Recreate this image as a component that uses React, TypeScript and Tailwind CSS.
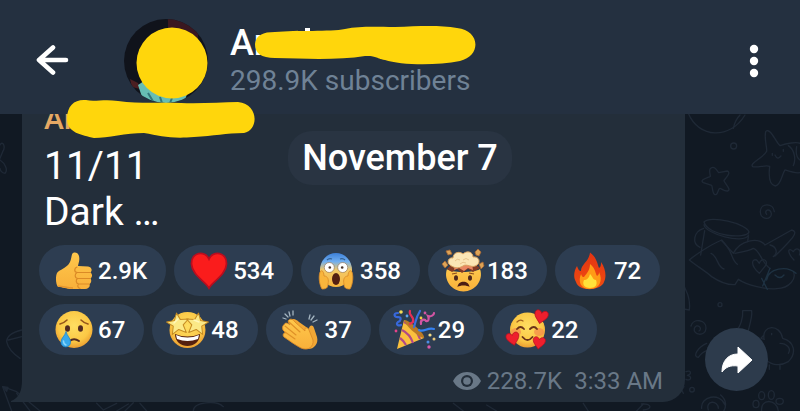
import type { ReactElement } from "react";

type EmojiName =
  | "thumb"
  | "heart"
  | "scream"
  | "mindBlown"
  | "fire"
  | "cry"
  | "starStruck"
  | "clap"
  | "party"
  | "loved";

interface Reaction {
  emoji: EmojiName;
  label: string;
  count: string;
}

const reactions: Reaction[] = [
  { emoji: "thumb", label: "Thumbs up", count: "2.9K" },
  { emoji: "heart", label: "Heart", count: "534" },
  { emoji: "scream", label: "Screaming", count: "358" },
  { emoji: "mindBlown", label: "Mind blown", count: "183" },
  { emoji: "fire", label: "Fire", count: "72" },
  { emoji: "cry", label: "Crying", count: "67" },
  { emoji: "starStruck", label: "Star struck", count: "48" },
  { emoji: "clap", label: "Clapping", count: "37" },
  { emoji: "party", label: "Party", count: "29" },
  { emoji: "loved", label: "Loved", count: "22" },
];

const HEART =
  "M0 9 C-3 5 -9 1 -9 -4 C-9 -10 -2 -10 0 -5 C2 -10 9 -10 9 -4 C9 1 3 5 0 9Z";
const STAR =
  "M0 -11 L3 -4 L11 -3.5 L5 1.5 L7 9.5 L0 5.5 L-7 9.5 L-5 1.5 L-11 -3.5 L-3 -4Z";

const emojiArt: Record<EmojiName, ReactElement> = {
  thumb: (
    <>
      <path
        d="M4 22 C6 19 11 18 15 14 C18 11 18 7 19 3.5 C20 .5 25 1 26 5 C27 9 25.5 12 25 15 L35 15.5 C39 16 39.5 20 37.5 21.5 C39.5 23 39.5 26 37.5 27.5 C39 29.5 38 32 36.5 33 C37.5 35.5 35.5 38 32 38 L19 38 C13 38 10 36 5 36 C2.5 33 2.5 25 4 22Z"
        fill="url(#skin)"
      />
      <path
        d="M24 16 C21 17 21 21 24 21.5 L37 21.5 M24 21.5 C21.5 23 21.5 27 24.5 27.5 L37 27.5 M24.5 27.5 C22.5 29 23 32.5 25.5 33 L36 33 M25.5 33 C24 35 25 37 27 37.5"
        fill="none"
        stroke="#db8a26"
        strokeWidth="1.2"
        strokeLinecap="round"
      />
      <path d="M5 35 C12 35.5 13 37 20 37" fill="none" stroke="#e5962e" strokeWidth="1.5" />
    </>
  ),
  heart: (
    <path
      d="M21 37 C18 31 4 24 3.5 13 C3 1 17 -1 21 8 C25 -1 39 1 38.5 13 C38 24 24 31 21 37Z"
      fill="#fa1c1c"
      stroke="#b90d1e"
      strokeWidth="1.8"
    />
  ),
  scream: (
    <>
      <ellipse cx="21" cy="19" rx="16" ry="17" fill="url(#screamFace)" />
      <path d="M12 9 Q14 7 17 8 M25 8 Q28 7 30 9" fill="none" stroke="#315f92" strokeWidth="1.2" />
      <circle cx="14.3" cy="16.5" r="5" fill="#fff" stroke="#8a6a4a" strokeWidth=".6" />
      <circle cx="27.7" cy="16.5" r="5" fill="#fff" stroke="#8a6a4a" strokeWidth=".6" />
      <circle cx="14.8" cy="16.5" r="1.3" fill="#4a352c" />
      <circle cx="27.2" cy="16.5" r="1.3" fill="#4a352c" />
      <ellipse cx="21" cy="28" rx="4" ry="6" fill="#542012" />
      <path
        d="M5 21 C7 18 9 21 9 25 C13 25 14 29 13 33 C13 37 11 38 7 38 C5 35 3 27 5 21Z M37 21 C35 18 33 21 33 25 C29 25 28 29 29 33 C29 37 31 38 35 38 C37 35 39 27 37 21Z"
        fill="#f9b53c"
        stroke="#d98927"
        strokeWidth=".8"
      />
    </>
  ),
  mindBlown: (
    <>
      <path d="M5 18 C8 22 33 22 38 18 C42 29 33 40.5 21.5 40.5 C10 40.5 1 29 5 18Z" fill="url(#skin)" />
      <path d="M5 18 L10 21 L15 18 L20 22 L26 18 L31 21 L38 17 L34 14 H9Z" fill="#833b25" />
      <path d="M13 13 H30 L31 19 L26 17 L22 20 L17 17 L12 19Z" fill="#e98662" />
      <path
        d="M8 14 C4 11 7 6 11 7 C11 1 18 0 21 3 C25 -1 31 1 31 6 C37 5 39 11 35 14 C30 18 25 12 21 15 C16 18 12 17 8 14Z"
        fill="#fbe5b5"
        stroke="#d9a15f"
        strokeWidth="1"
      />
      <path d="M13 10 Q15 7 18 9 M21 9 Q24 6 27 9 M18 13 Q21 10 24 12" fill="none" stroke="#e8c48c" strokeWidth="1" />
      <path
        d="M4 0 L8 -1 L10 3 L6 4Z M33 1 L36 -2 L39 1 L37 5 L34 4Z M0 13 L3 10 L6 14 L3 17Z M37 13 L41 11 L42 15 L39 18Z"
        fill="#dda356"
        stroke="#a76734"
        strokeWidth=".8"
      />
      <ellipse cx="14" cy="27" rx="2" ry="2.8" fill="#51291b" />
      <ellipse cx="28" cy="27" rx="2" ry="2.8" fill="#51291b" />
      <path d="M10 23 L15 22 M27 22 L32 23" stroke="#8d4d1d" strokeWidth="1.2" />
      <path d="M15.5 36 C16 29 27 29 27.5 36 C25 34 18 34 15.5 36Z" fill="#4c1d14" />
    </>
  ),
  fire: (
    <>
      <path
        d="M21 1.5 C28 7 28 12 30 17 C32 16 32 13 32 11 C37 18 37.5 26 35 31 C32 40 10 41 7 31 C4 26 5 20 8 15 C9 18 10 20 12 20 C12 13 20 11 21 1.5Z"
        fill="url(#flame)"
      />
      <path
        d="M21 13 C27 18 26 22 28 25 C30 24 30 22 30 21 C34 29 31 38 21 38 C11 38 9 30 12 23 C13 26 14 26 15 26 C18 22 21 19 21 13Z"
        fill="#ff9b16"
      />
      <path d="M21 23 C24 26 24 29 27 29 C29 34 26 37 21 37 C15 37 13 33 15 29 C18 29 20 27 21 23Z" fill="#ffe23a" />
    </>
  ),
  cry: (
    <>
      <circle cx="21" cy="19.5" r="18.5" fill="url(#face)" />
      <path
        d="M7 14 Q11 13 14 10 M28 10 Q31 13 35 14"
        fill="none"
        stroke="#95551b"
        strokeWidth="1.6"
        strokeLinecap="round"
      />
      <ellipse cx="14.5" cy="18.5" rx="2.5" ry="3.3" fill="#522b20" />
      <ellipse cx="27.5" cy="18.5" rx="2.5" ry="3.3" fill="#522b20" />
      <path d="M16.5 31 Q21 27.5 26 31" fill="none" stroke="#522b20" strokeWidth="2" strokeLinecap="round" />
      <path
        d="M13 21.5 C14 26 17.5 28 17.5 32 C17.5 38.5 8 38.5 8 32 C8 28 12 26 13 21.5Z"
        fill="#38a9ea"
        stroke="#2385c5"
        strokeWidth=".8"
      />
      <path d="M10.5 31 Q10.5 34 13 35" fill="none" stroke="#8ad7fb" strokeWidth="1.5" strokeLinecap="round" />
    </>
  ),
  starStruck: (
    <>
      <circle cx="21.5" cy="20" r="18" fill="url(#face)" />
      <path d="M9 24 Q21.5 29 34 24 C34 40 9 40 9 24Z" fill="#55200f" />
      <path d="M10 25 Q21.5 30 33 25 L32 29 Q21.5 33 11 29Z" fill="#fff" />
      <g fill="#fbe987" stroke="#c58b22" strokeWidth="1" strokeLinejoin="round">
        <path d={STAR} transform="translate(12 14) rotate(-8)" />
        <path d={STAR} transform="translate(31 14) rotate(8)" />
      </g>
      <path d="M8 13 L12 9 M28 10 L33 12" stroke="#fff8ba" strokeWidth="1.5" strokeLinecap="round" />
    </>
  ),
  clap: (
    <>
      <path
        d="M10 12 C12 7 16 9 19 12 L29 19 C29 15 33 14 34 18 L37 27 C39 34 33 40 27 39 C19 38 16 33 9 28 Z"
        fill="#f1a735"
      />
      <path
        d="M4 15 C5 12 8 13 10 15 L8 11 C10 8 13 9 15 12 L25 21 C24 17 28 17 29 20 L33 30 C34 37 28 41 21 38 C15 35 10 31 4 27 C2 25 4 22 6 23 L3 20 C2 17 3 15 4 15Z"
        fill="url(#skin)"
        stroke="#db8a26"
        strokeWidth=".9"
      />
      <path
        d="M5 16 L16 25 M9 12 L20 22 M5 22 L15 29"
        stroke="#df9027"
        strokeWidth="1.1"
        strokeLinecap="round"
      />
      <path
        d="M9 2 L10 6 M5 4 L8 7 M3 8 L6 9 M13 1 L13 5 M30 5 L29 9 M34 6 L31 10 M37 10 L33 12"
        stroke="#a3b4c0"
        strokeWidth="1.3"
        strokeLinecap="round"
      />
    </>
  ),
  party: (
    <>
      <path d="M4 39 L11 10 C19 14 27 21 31 28Z" fill="#fac03e" />
      <path d="M9 20 Q17 24 20 33 M7 28 Q11 31 13 35 M11 12 Q23 17 27 29" fill="none" stroke="#b14a87" strokeWidth="2.2" />
      <path d="M11 10 C15 9 33 24 31 28 C26 28 12 15 11 10Z" fill="#b97a25" />
      <g fill="none" strokeWidth="2.2" strokeLinecap="round">
        <path d="M5 3 C-1 3 2 8 5 7 C9 7 8 11 5 12 C2 15 6 16 8 15" stroke="#3768db" />
        <path d="M17 1 C15 6 22 6 20 12 L17 14" stroke="#e62f55" />
        <path d="M27 1 C23 7 23 11 21 17" stroke="#3970de" />
        <path d="M28 14 C27 9 32 9 33 11 C36 12 36 8 35 6 C38 7 41 5 41 3" stroke="#d255a4" />
        <path d="M26 20 C31 23 34 17 41 19" stroke="#3481f1" />
      </g>
      <g>
        <circle cx="8" cy="2" r="1.8" fill="#f5dc55" />
        <circle cx="32" cy="3" r="1.4" fill="#d255a4" />
        <circle cx="14" cy="6" r="1.4" fill="#5ba5ee" />
        <circle cx="28" cy="8" r="1.4" fill="#f5cc46" />
        <circle cx="37" cy="25" r="1.6" fill="#f5dc85" />
        <circle cx="41" cy="29" r="1.5" fill="#e9c879" />
        <circle cx="35" cy="32" r="1.5" fill="#4a8ee5" />
        <circle cx="36" cy="37" r="1.7" fill="#d75aab" />
        <circle cx="3" cy="21" r="1.4" fill="#e6448a" />
      </g>
    </>
  ),
  loved: (
    <>
      <circle cx="21.5" cy="20" r="17.5" fill="url(#face)" />
      <ellipse cx="10" cy="22" rx="5" ry="4" fill="#f48a4b" opacity=".7" />
      <ellipse cx="33" cy="22" rx="5" ry="4" fill="#f48a4b" opacity=".7" />
      <path
        d="M11 19 Q14.5 15 18 19 M24 19 Q28 15 31 19 M16.5 27 Q21.5 33 26.5 27"
        fill="none"
        stroke="#6b3319"
        strokeWidth="1.8"
        strokeLinecap="round"
      />
      <path d="M11 12 Q14 9 17 11" fill="none" stroke="#a5641f" strokeWidth="1.3" strokeLinecap="round" />
      <g fill="#ee1f2d" stroke="#b3101f" strokeWidth="1">
        <path d={HEART} transform="translate(35 7) rotate(12) scale(.75)" />
        <path d={HEART} transform="translate(7 29) rotate(-12) scale(.72)" />
        <path d={HEART} transform="translate(33 33) rotate(8) scale(.68)" />
      </g>
    </>
  ),
};

// Gradients shared by all the emoji
function EmojiDefs() {
  return (
    <svg className="absolute size-0" aria-hidden="true">
      <defs>
        <radialGradient id="face" cx=".5" cy=".4" r=".6">
          <stop offset="0" stopColor="#fede62" />
          <stop offset=".7" stopColor="#fbc845" />
          <stop offset="1" stopColor="#eb9e31" />
        </radialGradient>
        <linearGradient id="skin" x1="0" y1="0" x2="0" y2="1">
          <stop offset="0" stopColor="#ffc84c" />
          <stop offset="1" stopColor="#f8b03a" />
        </linearGradient>
        <linearGradient id="screamFace" x1="0" y1="0" x2="0" y2="1">
          <stop offset="0" stopColor="#3d80d8" />
          <stop offset=".25" stopColor="#6faef0" />
          <stop offset=".5" stopColor="#f3c968" />
          <stop offset="1" stopColor="#f8b63c" />
        </linearGradient>
        <linearGradient id="flame" x1="0" y1="0" x2="0" y2="1">
          <stop offset="0" stopColor="#e33411" />
          <stop offset="1" stopColor="#f04c12" />
        </linearGradient>
      </defs>
    </svg>
  );
}

function ReactionChip({ emoji, label, count }: Reaction) {
  return (
    <button
      type="button"
      className="flex h-[51px] items-center gap-[5px] rounded-full bg-[#2d3d51] pl-3.5 pr-[19px] text-2xl font-medium text-white"
    >
      <svg
        viewBox="0 0 40 40"
        className="size-10 overflow-visible"
        role="img"
        aria-label={label}
      >
        {emojiArt[emoji]}
      </svg>
      {count}
    </button>
  );
}

function Wallpaper() {
  return (
    <svg
      viewBox="0 0 800 411"
      preserveAspectRatio="xMaxYMin slice"
      className="absolute inset-0 size-full"
      fill="none"
      stroke="#1f2936"
      strokeWidth="4"
      strokeLinecap="round"
      strokeLinejoin="round"
      aria-hidden="true"
    >
      <g transform="translate(680 0) scale(.3333)">
        <path d="M25 340 C55 415 150 420 195 345 M160 385 Q165 360 180 345" />
        <circle cx="161" cy="438" r="9" />
        <path d="M92 505 C105 495 112 515 116 518 L142 513 C155 518 136 535 132 542 C136 552 155 570 143 573 C131 575 122 562 118 566 C112 575 112 588 103 583 C96 576 98 560 95 556 L70 548 C57 540 80 534 91 529 C90 519 86 508 92 505Z" />
        <path d="M257 395 C270 380 288 428 300 437 C320 430 350 425 360 430 M257 395 C252 420 262 442 260 454 C250 474 207 490 218 500 C233 504 258 494 269 499 C266 525 268 555 286 558 C304 555 305 523 315 510 C330 515 350 520 360 518" />
        <path d="M285 465 Q293 482 303 468 M277 460 V466 M310 448 V454 M325 437 C345 450 348 480 340 497 M350 440 Q345 470 360 480" />
        <path d="M283 635 C280 608 242 608 241 634 C240 660 276 662 274 640 C270 622 250 632 260 643" />
      </g>
      <g transform="translate(680 200) scale(.3333)">
        <path d="M72 66 C90 45 200 70 207 96 C200 118 85 110 72 66Z M72 75 C76 100 190 135 206 105" />
        <path d="M71 85 C40 95 35 130 60 142 M74 92 L62 165 M205 110 L203 125" />
        <path d="M28 180 C45 165 90 135 125 120 C140 140 150 150 160 160 C180 120 235 110 255 135 L335 90 C355 95 345 110 285 168 M28 180 C45 195 80 215 95 230 C120 247 145 255 165 254 L175 238 C200 255 260 270 290 266 C330 265 350 235 340 215" />
        <path d="M93 160 C115 170 110 200 132 207 M125 122 C160 150 150 175 172 193 M165 160 C195 155 215 150 220 145 C240 150 245 190 270 205 M270 135 C290 140 295 160 280 170" />
        <path d="M238 220 C210 195 215 175 230 180 L238 190 C245 170 265 180 258 195Z M342 180 C318 155 325 140 340 155 C350 138 365 150 358 165" />
        <path d="M260 240 C265 205 320 195 348 220 M285 225 Q300 240 312 225 M245 235 L262 268 M270 205 L248 258" stroke="#1e3141" />
        <circle cx="120" cy="314" r="6" />
        <path d="M0 240 C20 265 32 300 28 330 L0 325" />
        <path d="M33 378 C40 352 80 360 78 385 C75 412 38 405 43 385 C50 368 70 385 57 393" />
        <path d="M188 332 H215 C218 355 205 385 203 400 M188 332 C190 355 180 380 172 388 M80 430 C55 440 35 470 55 472 C60 465 70 455 80 452" />
        <path d="M252 415 C245 375 300 370 308 415 C345 425 350 460 325 485 C300 500 275 495 258 480 M252 405 L243 415 L253 418 M275 400 V404 M300 430 C320 430 335 445 325 460 M268 495 V508 M300 495 V508" />
        <path d="M18 515 C35 508 35 525 22 526 C40 530 30 545 18 538 M0 560 L10 580 M12 560 L-2 578" />
        <circle cx="36" cy="569" r="7" />
        <path d="M65 625 C60 590 120 575 135 615 M85 630 C75 600 115 600 115 625 M122 585 C140 600 140 620 130 635" />
        <path d="M245 633 C240 595 290 595 295 633" />
        <ellipse cx="228" cy="612" rx="9" ry="11" />
        <ellipse cx="245" cy="587" rx="9" ry="12" />
        <ellipse cx="274" cy="585" rx="9" ry="13" />
        <ellipse cx="299" cy="604" rx="11" ry="9" />
      </g>
      <g transform="translate(0 130) scale(.3333)">
        <path d="M0 45 C8 30 18 50 8 65 L0 85 M0 90 C15 100 25 120 15 130 C5 130 0 120 0 115" />
      </g>
      <g transform="translate(0 330) scale(.3333)">
        <path d="M65 0 C45 5 20 15 20 35 C25 60 45 75 60 85 M25 30 L65 20" />
        <path d="M8 170 L50 185 L120 243 M8 170 L35 243 M50 190 L90 243 M290 220 L310 240 L350 220 M350 243 L385 222 M400 218 L375 243 M420 220 L440 243 M580 243 C580 215 650 210 670 230" />
        <path d="M8 170 L24 172 L20 184Z" fill="#1f2936" />
        <path d="M1360 220 L1390 243 M1460 225 L1490 243 M1750 220 L1765 243 M1925 222 C1960 220 1955 240 1930 240 M1910 243 L1930 222" />
      </g>
    </svg>
  );
}

function ChatHeader() {
  return (
    <header className="relative z-10 flex items-center bg-[#243040] pl-9 pr-8 pt-[19px] pb-[11px]">
      <button type="button" aria-label="Back" className="mr-[54px]">
        <svg
          viewBox="0 0 34 32"
          className="h-8 w-[34px]"
          fill="none"
          stroke="#fff"
          strokeWidth="4.6"
          strokeLinecap="round"
          strokeLinejoin="round"
        >
          <path d="M30 15 H3 M17 2.5 L3 15 L17 27.5" />
        </svg>
      </button>
      <svg viewBox="0 0 84 84" className="size-[84px] shrink-0" role="img" aria-label="Channel photo">
        <clipPath id="avatar">
          <circle cx="42" cy="42" r="42" />
        </clipPath>
        <g clipPath="url(#avatar)">
          <rect width="84" height="84" fill="#10131b" />
          <path d="M44 0 H74 V24 L60 14 L44 11Z" fill="#3a1820" />
          <path d="M6 60 L14 64 L16 70 L8 68Z" fill="#4b1f22" />
          <path d="M14 66 L20 62 L64 72 L60 84 H20Z" fill="#67bdb4" />
          <path d="M24 74 L30 84 M36 78 L38 84 M48 79 L46 84" stroke="#33777b" strokeWidth="2" />
        </g>
        <circle cx="48" cy="44" r="35.5" fill="#ffd60c" />
      </svg>
      <div className="relative ml-[22px] flex-1">
        <h1 className="text-4xl leading-10 font-medium text-white">Ar</h1>
        <p className="text-[28px] leading-9 text-[#6f8296]">298.9K subscribers</p>
        <svg
          viewBox="0 0 222 40"
          className="absolute left-[25px] top-[3px] h-10 w-[222px]"
          aria-hidden="true"
        >
          <rect x="50" y="2" width="5" height="6" fill="#fff" />
          <path
            d="M0 18 C1 9 8 6 20 6 C42 4 75 6 90 3 C105 0 120 1 140 1 C165 0 185 -1 202 2 C225 4 227 30 205 35 C180 40 145 39 130 34 C120 32 122 30 110 30 C85 34 55 33 20 32 C6 32 0 27 0 18Z"
            fill="#ffd60c"
          />
        </svg>
      </div>
      <button type="button" aria-label="More options" className="px-2.5">
        <svg viewBox="0 0 8 34" className="h-[34px] w-2 overflow-visible" fill="#fff">
          <circle cx="4" cy="5" r="4.2" />
          <circle cx="4" cy="17" r="4.2" />
          <circle cx="4" cy="29" r="4.2" />
        </svg>
      </button>
    </header>
  );
}

function Message() {
  return (
    <article className="relative ml-[22px] flex-1 rounded-br-[22px] bg-[#232e3a]">
      {/* Bubble tail */}
      <svg viewBox="0 0 12 22" className="absolute -left-[11px] bottom-0 h-[22px] w-3" fill="#232e3a">
        <path d="M12 0 H11 C11 11 8 18 0 21 V22 H12Z" />
      </svg>
      <h2 className="relative -mt-[13px] ml-[22px] text-3xl leading-9 font-medium text-[#e5a964]">
        Ar
        <svg
          viewBox="0 0 190 40"
          className="absolute left-[22px] -top-[2px] z-20 h-10 w-[190px]"
          aria-hidden="true"
        >
          <path
            d="M1 20 C1 6 9 0 20 1 C28 3 38 0 52 2 C75 5 95 3 115 4 C135 5 155 3 172 3 C193 5 193 31 178 34 C160 34 148 37 128 38 C105 40 95 37 78 34 C60 34 42 39 28 39 C16 36 1 34 1 20Z"
            fill="#ffd60c"
          />
        </svg>
      </h2>
      <p className="ml-[22px] mt-1.5 text-[39px] leading-[46px] text-white">
        11/11
        <br />
        Dark …
      </p>
      <div className="mt-2.5 flex flex-wrap gap-2 px-[17px]">
        {reactions.map((reaction) => (
          <ReactionChip key={reaction.emoji} {...reaction} />
        ))}
      </div>
      <footer className="mt-2.5 flex items-center justify-end pb-[5px] pr-[22px] text-2xl leading-8 text-[#697887]">
        <svg viewBox="0 0 28 18" className="mr-1.5 h-[18px] w-7" role="img" aria-label="Views">
          <path
            d="M0 9 C6 -3 22 -3 28 9 C22 21 6 21 0 9Z"
            fill="#697887"
          />
          <circle cx="14" cy="9" r="6" fill="#232e3a" />
          <circle cx="14" cy="9" r="3.8" fill="#697887" />
        </svg>
        <span>228.7K</span>
        <time className="ml-3">3:33 AM</time>
      </footer>
    </article>
  );
}

export default function App() {
  return (
    <div className="relative min-h-screen overflow-hidden bg-[#111923] font-[Roboto,sans-serif]">
      <EmojiDefs />
      <Wallpaper />
      <ChatHeader />
      <main className="relative flex items-end">
        <Message />
        <div className="absolute inset-x-0 top-[17px] flex justify-center">
          <time className="rounded-3xl bg-[#293442] px-3.5 text-4xl leading-[54px] font-medium text-white">
            November 7
          </time>
        </div>
        <button
          type="button"
          aria-label="Share"
          className="mb-[11px] ml-5 mr-8 flex size-[63px] items-center justify-center rounded-full bg-[#2d3b4c]"
        >
          <svg viewBox="0 0 32 28" className="h-7 w-8" fill="#fff" stroke="#fff" strokeWidth="1" strokeLinejoin="round">
            <path d="M17 1 L31 14 L17 27 V20 C9 19 5 21 1 26 C1 15 7 8 17 8Z" />
          </svg>
        </button>
      </main>
    </div>
  );
}
